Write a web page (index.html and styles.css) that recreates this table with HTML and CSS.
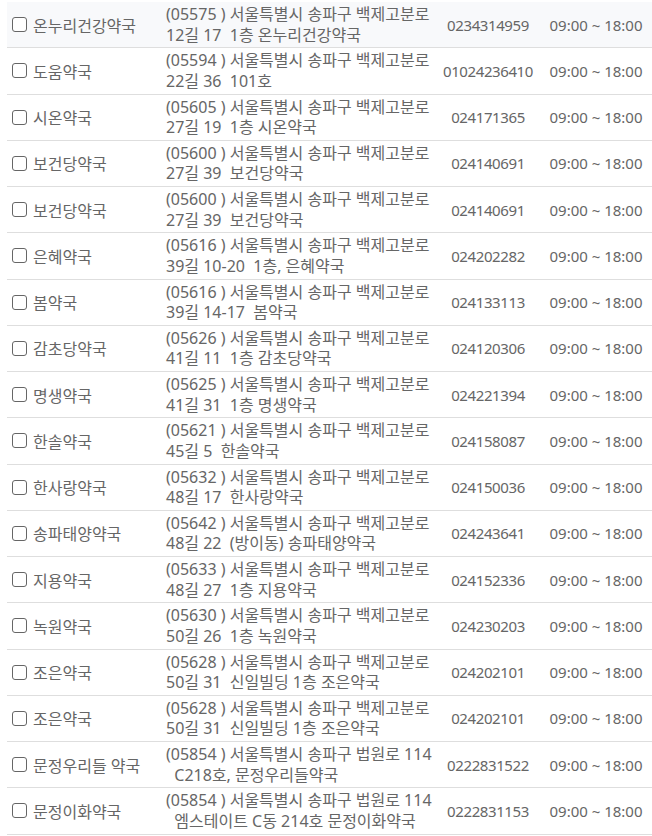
FILE: index.html
```html
<!DOCTYPE html>
<html lang="ko">
<head>
    <meta charset="UTF-8">
    <title>약국 목록</title>
    <link rel="stylesheet" href="styles.css">
</head>
<body>
    <div class="pharmacy-list">
        <div class="row hover">
            <label class="name"><input type="checkbox" class="chk">온누리건강약국</label>
            <div class="addr">(05575 ) 서울특별시 송파구 백제고분로<br>12길 17 &nbsp;1층 온누리건강약국</div>
            <div class="tel">0234314959</div>
            <div class="hours">09:00 ~ 18:00</div>
        </div>
        <div class="row">
            <label class="name"><input type="checkbox" class="chk">도움약국</label>
            <div class="addr">(05594 ) 서울특별시 송파구 백제고분로<br>22길 36 &nbsp;101호</div>
            <div class="tel">01024236410</div>
            <div class="hours">09:00 ~ 18:00</div>
        </div>
        <div class="row">
            <label class="name"><input type="checkbox" class="chk">시온약국</label>
            <div class="addr">(05605 ) 서울특별시 송파구 백제고분로<br>27길 19 &nbsp;1층 시온약국</div>
            <div class="tel">024171365</div>
            <div class="hours">09:00 ~ 18:00</div>
        </div>
        <div class="row">
            <label class="name"><input type="checkbox" class="chk">보건당약국</label>
            <div class="addr">(05600 ) 서울특별시 송파구 백제고분로<br>27길 39 &nbsp;보건당약국</div>
            <div class="tel">024140691</div>
            <div class="hours">09:00 ~ 18:00</div>
        </div>
        <div class="row">
            <label class="name"><input type="checkbox" class="chk">보건당약국</label>
            <div class="addr">(05600 ) 서울특별시 송파구 백제고분로<br>27길 39 &nbsp;보건당약국</div>
            <div class="tel">024140691</div>
            <div class="hours">09:00 ~ 18:00</div>
        </div>
        <div class="row">
            <label class="name"><input type="checkbox" class="chk">은혜약국</label>
            <div class="addr">(05616 ) 서울특별시 송파구 백제고분로<br>39길 10-20 &nbsp;1층, 은혜약국</div>
            <div class="tel">024202282</div>
            <div class="hours">09:00 ~ 18:00</div>
        </div>
        <div class="row">
            <label class="name"><input type="checkbox" class="chk">봄약국</label>
            <div class="addr">(05616 ) 서울특별시 송파구 백제고분로<br>39길 14-17 &nbsp;봄약국</div>
            <div class="tel">024133113</div>
            <div class="hours">09:00 ~ 18:00</div>
        </div>
        <div class="row">
            <label class="name"><input type="checkbox" class="chk">감초당약국</label>
            <div class="addr">(05626 ) 서울특별시 송파구 백제고분로<br>41길 11 &nbsp;1층 감초당약국</div>
            <div class="tel">024120306</div>
            <div class="hours">09:00 ~ 18:00</div>
        </div>
        <div class="row">
            <label class="name"><input type="checkbox" class="chk">명생약국</label>
            <div class="addr">(05625 ) 서울특별시 송파구 백제고분로<br>41길 31 &nbsp;1층 명생약국</div>
            <div class="tel">024221394</div>
            <div class="hours">09:00 ~ 18:00</div>
        </div>
        <div class="row">
            <label class="name"><input type="checkbox" class="chk">한솔약국</label>
            <div class="addr">(05621 ) 서울특별시 송파구 백제고분로<br>45길 5 &nbsp;한솔약국</div>
            <div class="tel">024158087</div>
            <div class="hours">09:00 ~ 18:00</div>
        </div>
        <div class="row">
            <label class="name"><input type="checkbox" class="chk">한사랑약국</label>
            <div class="addr">(05632 ) 서울특별시 송파구 백제고분로<br>48길 17 &nbsp;한사랑약국</div>
            <div class="tel">024150036</div>
            <div class="hours">09:00 ~ 18:00</div>
        </div>
        <div class="row">
            <label class="name"><input type="checkbox" class="chk">송파태양약국</label>
            <div class="addr">(05642 ) 서울특별시 송파구 백제고분로<br>48길 22 &nbsp;(방이동) 송파태양약국</div>
            <div class="tel">024243641</div>
            <div class="hours">09:00 ~ 18:00</div>
        </div>
        <div class="row">
            <label class="name"><input type="checkbox" class="chk">지용약국</label>
            <div class="addr">(05633 ) 서울특별시 송파구 백제고분로<br>48길 27 &nbsp;1층 지용약국</div>
            <div class="tel">024152336</div>
            <div class="hours">09:00 ~ 18:00</div>
        </div>
        <div class="row">
            <label class="name"><input type="checkbox" class="chk">녹원약국</label>
            <div class="addr">(05630 ) 서울특별시 송파구 백제고분로<br>50길 26 &nbsp;1층 녹원약국</div>
            <div class="tel">024230203</div>
            <div class="hours">09:00 ~ 18:00</div>
        </div>
        <div class="row">
            <label class="name"><input type="checkbox" class="chk">조은약국</label>
            <div class="addr">(05628 ) 서울특별시 송파구 백제고분로<br>50길 31 &nbsp;신일빌딩 1층 조은약국</div>
            <div class="tel">024202101</div>
            <div class="hours">09:00 ~ 18:00</div>
        </div>
        <div class="row">
            <label class="name"><input type="checkbox" class="chk">조은약국</label>
            <div class="addr">(05628 ) 서울특별시 송파구 백제고분로<br>50길 31 &nbsp;신일빌딩 1층 조은약국</div>
            <div class="tel">024202101</div>
            <div class="hours">09:00 ~ 18:00</div>
        </div>
        <div class="row">
            <label class="name"><input type="checkbox" class="chk">문정우리들 약국</label>
            <div class="addr">(05854 ) 서울특별시 송파구 법원로 114<br>&nbsp;&nbsp;C218호, 문정우리들약국</div>
            <div class="tel">0222831522</div>
            <div class="hours">09:00 ~ 18:00</div>
        </div>
        <div class="row">
            <label class="name"><input type="checkbox" class="chk">문정이화약국</label>
            <div class="addr">(05854 ) 서울특별시 송파구 법원로 114<br>&nbsp;&nbsp;엠스테이트 C동 214호 문정이화약국</div>
            <div class="tel">0222831153</div>
            <div class="hours">09:00 ~ 18:00</div>
        </div>
    </div>
</body>
</html>
```

FILE: styles.css
```css
body {
    margin: 0;
    background: #fff;
    font-family: "Noto Sans", "Noto Sans CJK KR", sans-serif;
    font-size: 16px;
    color: #666;
    overflow: hidden;
}
.pharmacy-list {
    margin-left: 7px;
    padding-top: 2px;
}
.row {
    display: grid;
    grid-template-columns: 159px 270px 104px 112px;
    align-items: center;
    height: 46.25px;
    box-sizing: border-box;
    border-bottom: 1px solid #dedede;
}
.row.hover {
    background: #f8f9fb;
}
.name {
    display: flex;
    align-items: center;
    gap: 6px;
    padding-left: 5px;
    white-space: nowrap;
}
.chk {
    appearance: none;
    -webkit-appearance: none;
    margin: 0;
    width: 15px;
    height: 15px;
    border: 1.5px solid #666;
    border-radius: 3px;
    background: #fff;
    flex: none;
}
.addr {
    align-self: start;
    padding-top: 2px;
    line-height: 20.5px;
    white-space: nowrap;
}
.tel,
.hours {
    font-size: 15px;
    text-align: center;
    white-space: nowrap;
}
.tel {
    letter-spacing: -0.4px;
}
```
